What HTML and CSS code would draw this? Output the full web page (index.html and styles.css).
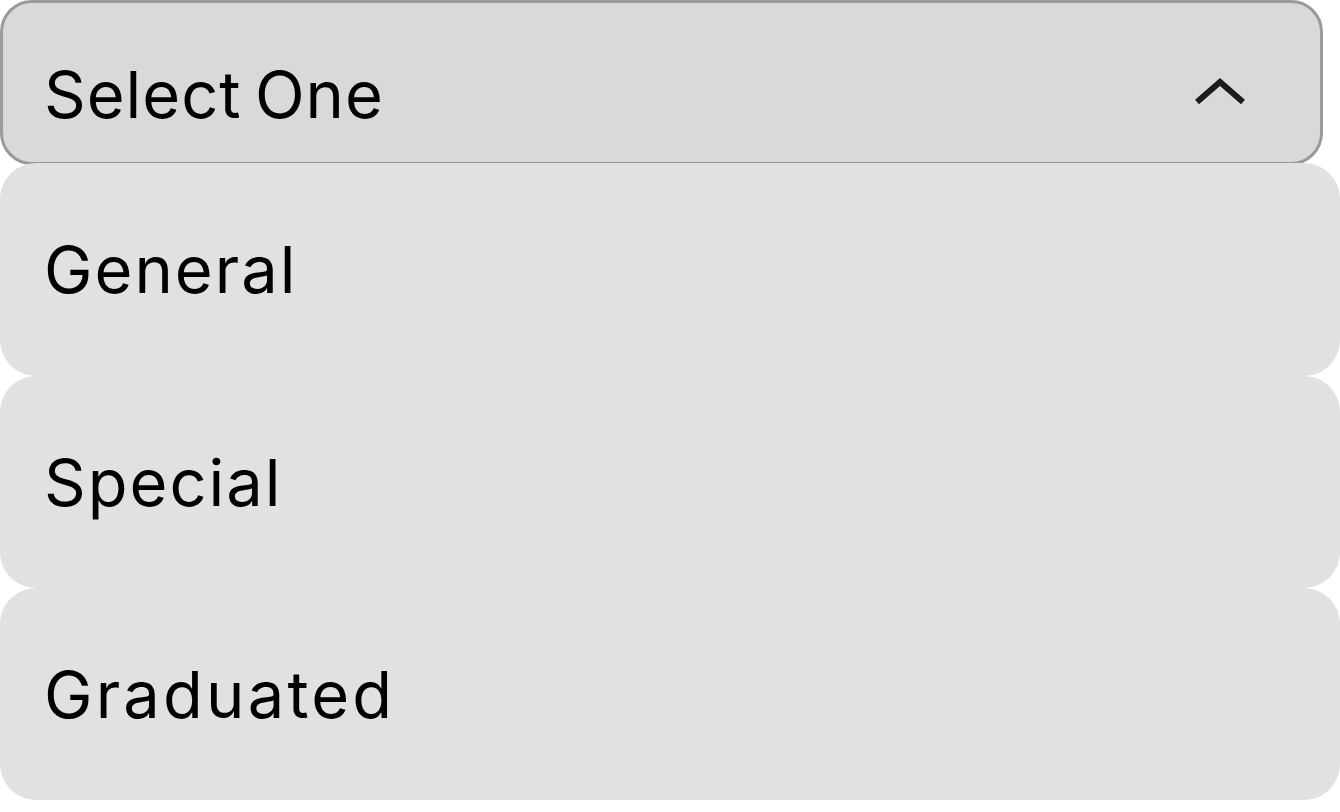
FILE: index.html
```html
<!DOCTYPE html>
<html>
<head>
<meta charset="utf-8">
<link rel="stylesheet" href="styles.css">
</head>
<body>
<div class="dropdown">
  <div class="select">
    <span class="label label-head">Select One</span>
    <svg class="chevron" width="52" height="30" viewBox="0 0 52 30">
      <polyline points="3,25 26,5 49,25" fill="none" stroke="#1c1c1e" stroke-width="6" stroke-linejoin="miter" stroke-linecap="butt"/>
    </svg>
  </div>
  <div class="option"><span class="label">General</span></div>
  <div class="option"><span class="label">Special</span></div>
  <div class="option"><span class="label label-wide">Graduated</span></div>
</div>
</body>
</html>
```

FILE: styles.css
```css
html, body {
  margin: 0;
  padding: 0;
  background: #ffffff;
}
.dropdown {
  width: 1340px;
  display: flex;
  flex-direction: column;
}
.label {
  font-family: "Inter", "Noto Sans", sans-serif;
  font-size: 65px;
  font-weight: 400;
  letter-spacing: 2px;
  color: #000000;
  line-height: 1;
}
.label-head {
  letter-spacing: 1px;
  word-spacing: -6px;
}
.label-wide {
  letter-spacing: 3.2px;
}
.select {
  width: 1323px;
  height: 165px;
  box-sizing: border-box;
  border: 3px solid #9a9a9a;
  border-radius: 32px;
  background: #d9d9d9;
  display: flex;
  align-items: center;
  justify-content: space-between;
  padding: 24px 74px 0 41px;
}
.chevron {
  display: block;
  margin-top: -6px;
}
.option {
  height: 212px;
  box-sizing: border-box;
  border-radius: 36px;
  background: #e1e1e1;
  display: flex;
  align-items: center;
  padding-left: 44px;
}
.select + .option {
  margin-top: -2px;
  height: 213px;
}
```
